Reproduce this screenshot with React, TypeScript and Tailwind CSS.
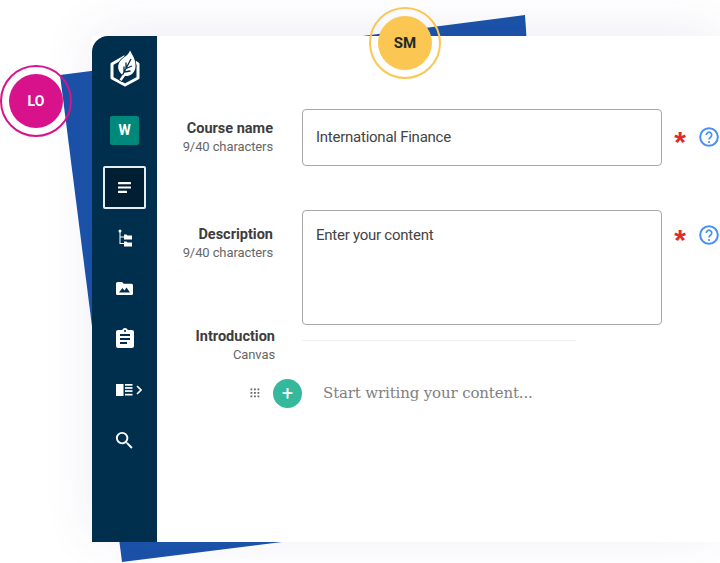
import { MdAssignment, MdSearch } from 'react-icons/md';

const NAV_ROW = 'flex h-[50.5px] items-center justify-center text-white';

function LeafLogo() {
  return (
    <svg width="30" height="37" viewBox="0 0 30 37" fill="none">
      <path d="M15 6.5 L2 14 V28 L15 35 L28 28 V14 L25 12" stroke="white" strokeWidth="3" strokeLinejoin="round" />
      <path
        d="M20 0.5 C23 6 26 10 25.5 17 C25 23 20 26.500 15 26 L11.500 31 L9.500 29.500 L12.500 25 C7 21 7 14 11 10 C14 7 18 5.500 20 0.5Z"
        fill="white"
        stroke="#002e4d"
        strokeWidth="1.500"
        paintOrder="stroke"
      />
      <path d="M12.500 25 L21 9 M16 18.500 V12.500 M16 18.500 L22 16 M14 22 V16.500 M14 22 L20.500 21" stroke="#002e4d" strokeWidth="1.300" />
    </svg>
  );
}

function NotesIcon() {
  return (
    <svg width="13" height="11" viewBox="0 0 13 11" fill="white">
      <rect width="13" height="2.2" rx="0.5" />
      <rect y="4.4" width="13" height="2.2" rx="0.5" />
      <rect y="8.8" width="9" height="2.2" rx="0.5" />
    </svg>
  );
}

function TreeIcon() {
  return (
    <svg className="ml-[1px]" width="14" height="18" viewBox="0 0 14 18" fill="white">
      <circle cx="2" cy="2" r="1.5" />
      <path d="M1.500 3 H2.500 V7.500 H6 V8.500 H2.500 V14 H6 V15 H1.500Z" />
      <path d="M6 5.500 H8.500 L9.500 6.500 H14 V10.500 H6Z" />
      <path d="M6 12.500 H8.500 L9.500 13.500 H14 V17.500 H6Z" />
    </svg>
  );
}

function MediaFolderIcon() {
  return (
    <svg width="17" height="13" viewBox="0 0 17 13">
      <path d="M1.500 0 H6 L7.700 1.700 H15.500 A1.500 1.500 0 0 1 17 3.200 V11.500 A1.500 1.500 0 0 1 15.500 13 H1.500 A1.500 1.500 0 0 1 0 11.500 V1.500 A1.500 1.500 0 0 1 1.500 0Z" fill="white" />
      <path d="M3 10.500 L6.300 6 L8.500 8.500 L10.500 5.500 L14 10.500Z" fill="#002e4d" />
    </svg>
  );
}

function OutlineToggleIcon() {
  return (
    <svg className="ml-[9px]" width="26" height="14" viewBox="0 0 26 14" fill="white">
      <rect x="0" y="1" width="7.500" height="12" />
      <rect x="9" y="1" width="7.500" height="1.700" />
      <rect x="9" y="4.100" width="7.500" height="1.700" />
      <rect x="9" y="7.200" width="7.500" height="1.700" />
      <rect x="9" y="10.800" width="7.500" height="1.700" />
      <path d="M21 3 L25 7 L21 11" fill="none" stroke="white" strokeWidth="1.600" />
    </svg>
  );
}

function HelpIcon() {
  return (
    <svg width="20" height="20" viewBox="0 0 20 20" fill="none">
      <circle cx="10" cy="10" r="8.800" stroke="#4a90f0" strokeWidth="2" />
      <path d="M7.300 8 A2.700 2.700 0 1 1 11.500 10.200 C10.500 10.900 10 11.300 10 12.500" stroke="#4a90f0" strokeWidth="1.700" />
      <circle cx="10" cy="15" r="1.100" fill="#4a90f0" />
    </svg>
  );
}

function RequiredMarks({ height }: { height: string }) {
  return (
    <div className={`ml-[11px] flex items-center gap-[12px] ${height}`}>
      <span className="mt-[10px] w-[14px] text-center font-['Liberation_Sans',sans-serif] text-[30px] leading-none font-bold text-[#e02b2b]">*</span>
      <HelpIcon />
    </div>
  );
}

function FieldLabel({ title, hint }: { title: string; hint: string }) {
  return (
    <div className="w-[116px] text-right">
      <div className="text-[14.5px] leading-[19px] font-bold text-[#3d3d3d]">{title}</div>
      <div className="text-[13px] leading-[18px] tracking-[-0.1px] text-[#666666]">{hint}</div>
    </div>
  );
}

export default function App() {
  return (
    <div className="relative h-[563px] w-[720px] overflow-hidden bg-white font-['Roboto',sans-serif]">
      {/* blue sheet behind the card */}
      <svg className="absolute top-0 left-0" width="720" height="563">
        <polygon points="60,75 525,15 528,60 282,542 122,562" fill="#1a52a8" />
      </svg>

      <div className="relative ml-[92px] flex h-[542px] pt-[36px]">
        <div className="flex h-[506px] w-[628px] bg-white shadow-[0_-6px_50px_rgba(70,70,160,0.09)]">
          <aside className="flex w-[65px] flex-none flex-col items-center rounded-tl-[16px] bg-[#002e4d]">
            <div className="mt-[14px] h-[37px]"><LeafLogo /></div>
            <div className="mt-[29px] flex h-[29px] w-[29px] items-center justify-center rounded-[2px] bg-[#00897b] text-[14px] font-bold text-white">W</div>
            <div className="mt-[21px] flex h-[43px] w-[43px] items-center justify-center rounded-[2px] border-2 border-[#e4eef2] bg-[#001f33]">
              <NotesIcon />
            </div>
            <div className={`${NAV_ROW} mt-[4px]`}><TreeIcon /></div>
            <div className={NAV_ROW}><MediaFolderIcon /></div>
            <div className={NAV_ROW}><MdAssignment size={24} /></div>
            <div className={NAV_ROW}><OutlineToggleIcon /></div>
            <div className={NAV_ROW}><MdSearch size={23} /></div>
          </aside>

          <main className="min-w-0 flex-1">
            <div className="mt-[73px] flex">
              <div className="mt-[9.5px]"><FieldLabel title="Course name" hint="9/40 characters" /></div>
              <div className="ml-[29px] flex h-[57px] w-[360px] items-center rounded-[4px] border border-[#a8a8a8] px-[13px] text-[15px] tracking-[-0.25px] text-[#444444]">International Finance</div>
              <RequiredMarks height="h-[56px]" />
            </div>
            <div className="mt-[44px] flex">
              <div className="mt-[14.5px]"><FieldLabel title="Description" hint="9/40 characters" /></div>
              <div className="ml-[29px] h-[115px] w-[360px] rounded-[4px] border border-[#a8a8a8] px-[13px] pt-[13px] text-[15px] leading-[22px] tracking-[-0.25px] text-[#444444]">Enter your content</div>
              <RequiredMarks height="h-[50px]" />
            </div>
            <div className="mt-[1px] flex">
              <div className="mt-[0.5px] ml-[2px]"><FieldLabel title="Introduction" hint="Canvas" /></div>
              <div className="mt-[14px] ml-[27px] h-px w-[274px] bg-[#efefef]" />
            </div>
            <div className="mt-[15px] flex items-center">
              <svg className="ml-[93px]" width="10" height="10" viewBox="0 0 10 10" fill="#666666">
                {[0.5, 4, 7.5].flatMap((y) => [0.5, 4, 7.5].map((x) => <rect key={`${x}-${y}`} x={x} y={y} width="1.8" height="1.8" />))}
              </svg>
              <div className="ml-[13px] flex h-[29px] w-[29px] items-center justify-center rounded-full bg-[#35b89c] text-[20px] leading-none text-white">+</div>
              <div className="ml-[21px] font-['DejaVu_Serif',serif] text-[15px] tracking-[-0.15px] text-[#808080]">Start writing your content...</div>
            </div>
          </main>
        </div>
      </div>

      {/* avatars */}
      <div className="absolute top-[65px] left-0 flex h-[72px] w-[72px] items-center justify-center rounded-full border-2 border-[#d8128a]">
        <div className="flex h-[54px] w-[54px] items-center justify-center rounded-full bg-[#d8128a] text-[14px] font-bold text-white">LO</div>
      </div>
      <div className="absolute top-[7px] left-[369px] flex h-[72px] w-[72px] items-center justify-center rounded-full border-2 border-[#fac655]">
        <div className="flex h-[54px] w-[54px] items-center justify-center rounded-full bg-[#fcc652] text-[15px] font-bold text-[#1d2b2b]">SM</div>
      </div>
    </div>
  );
}
